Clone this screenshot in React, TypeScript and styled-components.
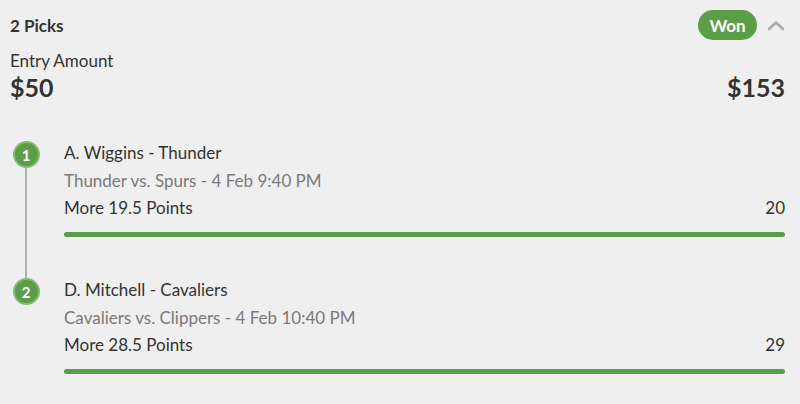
import styled, { createGlobalStyle } from "styled-components";

const GlobalStyle = createGlobalStyle`
  body {
    margin: 0;
    background: #efefef;
    font-family: Lato, "Open Sans", sans-serif;
    color: #333;
  }
`;

const Card = styled.div`
  width: 800px;
  height: 404px;
  box-sizing: border-box;
  padding: 0 15px 0 10px;
  background: #efefef;
`;

const Header = styled.div`
  display: flex;
  align-items: center;
  justify-content: space-between;
  height: 50px;
`;

const Title = styled.span`
  font-size: 17px;
  font-weight: 700;
`;

const HeaderRight = styled.div`
  display: flex;
  align-items: center;
  gap: 10px;
`;

const Badge = styled.span`
  display: inline-flex;
  align-items: center;
  justify-content: center;
  width: 59px;
  height: 30px;
  border-radius: 15px;
  background: #5c9e47;
  color: #fff;
  font-size: 17px;
  font-weight: 700;
`;

const Amounts = styled.div`
  display: flex;
  align-items: flex-end;
  justify-content: space-between;
`;

const Label = styled.div`
  font-size: 17px;
  line-height: 22px;
`;

const Money = styled.div`
  font-size: 25px;
  line-height: 30px;
  font-weight: 700;
`;

const Picks = styled.div`
  margin-top: 36px;
`;

const Pick = styled.div`
  display: grid;
  grid-template-columns: 54px 1fr;
`;

const Marker = styled.div`
  display: flex;
  flex-direction: column;
  align-items: center;
  width: 32px;
  padding-top: 3px;
`;

const Dot = styled.span`
  display: flex;
  align-items: center;
  justify-content: center;
  width: 27px;
  height: 27px;
  box-sizing: border-box;
  border-radius: 50%;
  border: 2px solid #85bb72;
  background: #5c9e47;
  color: #fff;
  font-size: 15px;
  font-weight: 700;
`;

const Line = styled.span`
  flex: 1;
  width: 2px;
  background: #b3b3b3;
  margin-bottom: -3px;
`;

const Body = styled.div`
  display: flex;
  flex-direction: column;
  padding-top: 1px;
  padding-bottom: 38px;
`;

const Name = styled.div`
  font-size: 17px;
  line-height: 28px;
`;

const Sub = styled.div`
  font-size: 17px;
  line-height: 27px;
  color: #7a7a7a;
`;

const StatRow = styled.div`
  display: flex;
  justify-content: space-between;
  font-size: 17px;
  line-height: 27px;
`;

const Bar = styled.div`
  margin-top: 11px;
  height: 5px;
  border-radius: 3px;
  background: #5c9e47;
`;

const picks = [
  { n: 1, name: "A. Wiggins - Thunder", game: "Thunder vs. Spurs - 4 Feb 9:40 PM", line: "More 19.5 Points", result: "20" },
  { n: 2, name: "D. Mitchell - Cavaliers", game: "Cavaliers vs. Clippers - 4 Feb 10:40 PM", line: "More 28.5 Points", result: "29" },
];

function App() {
  return (
    <Card>
      <GlobalStyle />
      <Header>
        <Title>2 Picks</Title>
        <HeaderRight>
          <Badge>Won</Badge>
          <svg width="18" height="11" viewBox="0 0 18 11">
            <path d="M2 9 L9 2.5 L16 9" fill="none" stroke="#aaa" strokeWidth="2.6" strokeLinecap="round" strokeLinejoin="round" />
          </svg>
        </HeaderRight>
      </Header>
      <Amounts>
        <div>
          <Label>Entry Amount</Label>
          <Money>$50</Money>
        </div>
        <Money>$153</Money>
      </Amounts>
      <Picks>
        {picks.map((p, i) => (
          <Pick key={p.n}>
            <Marker>
              <Dot>{p.n}</Dot>
              {i < picks.length - 1 && <Line />}
            </Marker>
            <Body>
              <Name>{p.name}</Name>
              <Sub>{p.game}</Sub>
              <StatRow>
                <span>{p.line}</span>
                <span>{p.result}</span>
              </StatRow>
              <Bar />
            </Body>
          </Pick>
        ))}
      </Picks>
    </Card>
  );
}

export default App;
